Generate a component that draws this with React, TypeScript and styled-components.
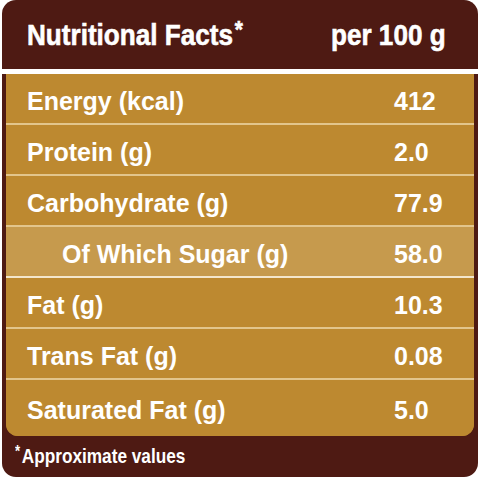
import styled, { createGlobalStyle } from 'styled-components';

const GlobalStyle = createGlobalStyle`
  html, body {
    margin: 0;
    padding: 0;
    background: #ffffff;
  }
`;

const rows = [
  { label: 'Energy (kcal)', value: '412' },
  { label: 'Protein (g)', value: '2.0' },
  { label: 'Carbohydrate (g)', value: '77.9' },
  { label: 'Of Which Sugar (g)', value: '58.0', sub: true },
  { label: 'Fat (g)', value: '10.3' },
  { label: 'Trans Fat (g)', value: '0.08' },
  { label: 'Saturated Fat (g)', value: '5.0' },
];

export default function App() {
  return (
    <>
      <GlobalStyle />
      <Card>
        <Header>
          <Title>
            <Narrow>
              Nutritional Facts<sup>*</sup>
            </Narrow>
          </Title>
          <Narrow>per 100 g</Narrow>
        </Header>
        <Table>
          {rows.map((r, i) => (
            <Row key={r.label} sub={r.sub} last={i === rows.length - 1}>
              <Label sub={r.sub}>{r.label}</Label>
              <Value>{r.value}</Value>
            </Row>
          ))}
        </Table>
        <Footer>
          <Narrow>
            <sup>*</sup>Approximate values
          </Narrow>
        </Footer>
      </Card>
    </>
  );
}

const Card = styled.div`
  margin: 0 2px;
  width: 476px;
  height: 477px;
  box-sizing: border-box;
  padding: 0 4px;
  background: #4e1a13;
  border-radius: 14px;
  display: flex;
  flex-direction: column;
`;

const Narrow = styled.span`
  display: inline-block;
  white-space: nowrap;
  transform: scaleX(0.82);
  transform-origin: left center;
`;

const Header = styled.div`
  height: 74px;
  display: flex;
  align-items: center;
  box-sizing: border-box;
  padding: 0 4px 0 25px;
  margin: 0 -4px;
  color: #ffffff;
  font-family: 'Liberation Sans', Arial, sans-serif;
  font-weight: bold;
  font-size: 30px;
  border-bottom: 5px solid #ffffff;
  ${Narrow} {
    transform: scaleX(0.87);
    -webkit-text-stroke: 0.6px #ffffff;
  }
`;

const Title = styled.div`
  width: 304px;
  sup {
    font-size: 24px;
    vertical-align: 7px;
    line-height: 0;
    margin-left: 2px;
  }
`;

const Table = styled.div`
  background: #bd8930;
  border-radius: 0 0 12px 12px;
  overflow: hidden;
`;

const Row = styled.div<{ sub?: boolean; last?: boolean }>`
  display: grid;
  grid-template-columns: 367px 1fr;
  align-items: center;
  padding: 5px 0 0 21px;
  box-sizing: ${(p) => (p.last ? 'border-box' : 'content-box')};
  height: ${(p) => (p.last ? 56 : 44)}px;
  background: ${(p) => (p.sub ? '#c69a4d' : '#bd8930')};
  border-bottom: ${(p) =>
    p.last ? 'none' : p.sub ? '2px solid #f3e6cc' : '2px solid #e2c58c'};
  color: #ffffff;
  font-family: 'Liberation Sans', Arial, sans-serif;
  font-weight: bold;
  font-size: 25px;
`;

const Label = styled.div<{ sub?: boolean }>`
  padding-left: ${(p) => (p.sub ? 35 : 0)}px;
`;

const Value = styled.div``;

const Footer = styled.div`
  flex: 1;
  display: flex;
  align-items: center;
  padding: 0 0 2px 9px;
  color: #ffffff;
  font-family: 'Liberation Sans', Arial, sans-serif;
  font-weight: bold;
  font-size: 21px;
  sup {
    font-size: 16px;
    vertical-align: 6px;
    line-height: 0;
    margin-right: 2px;
  }
`;
